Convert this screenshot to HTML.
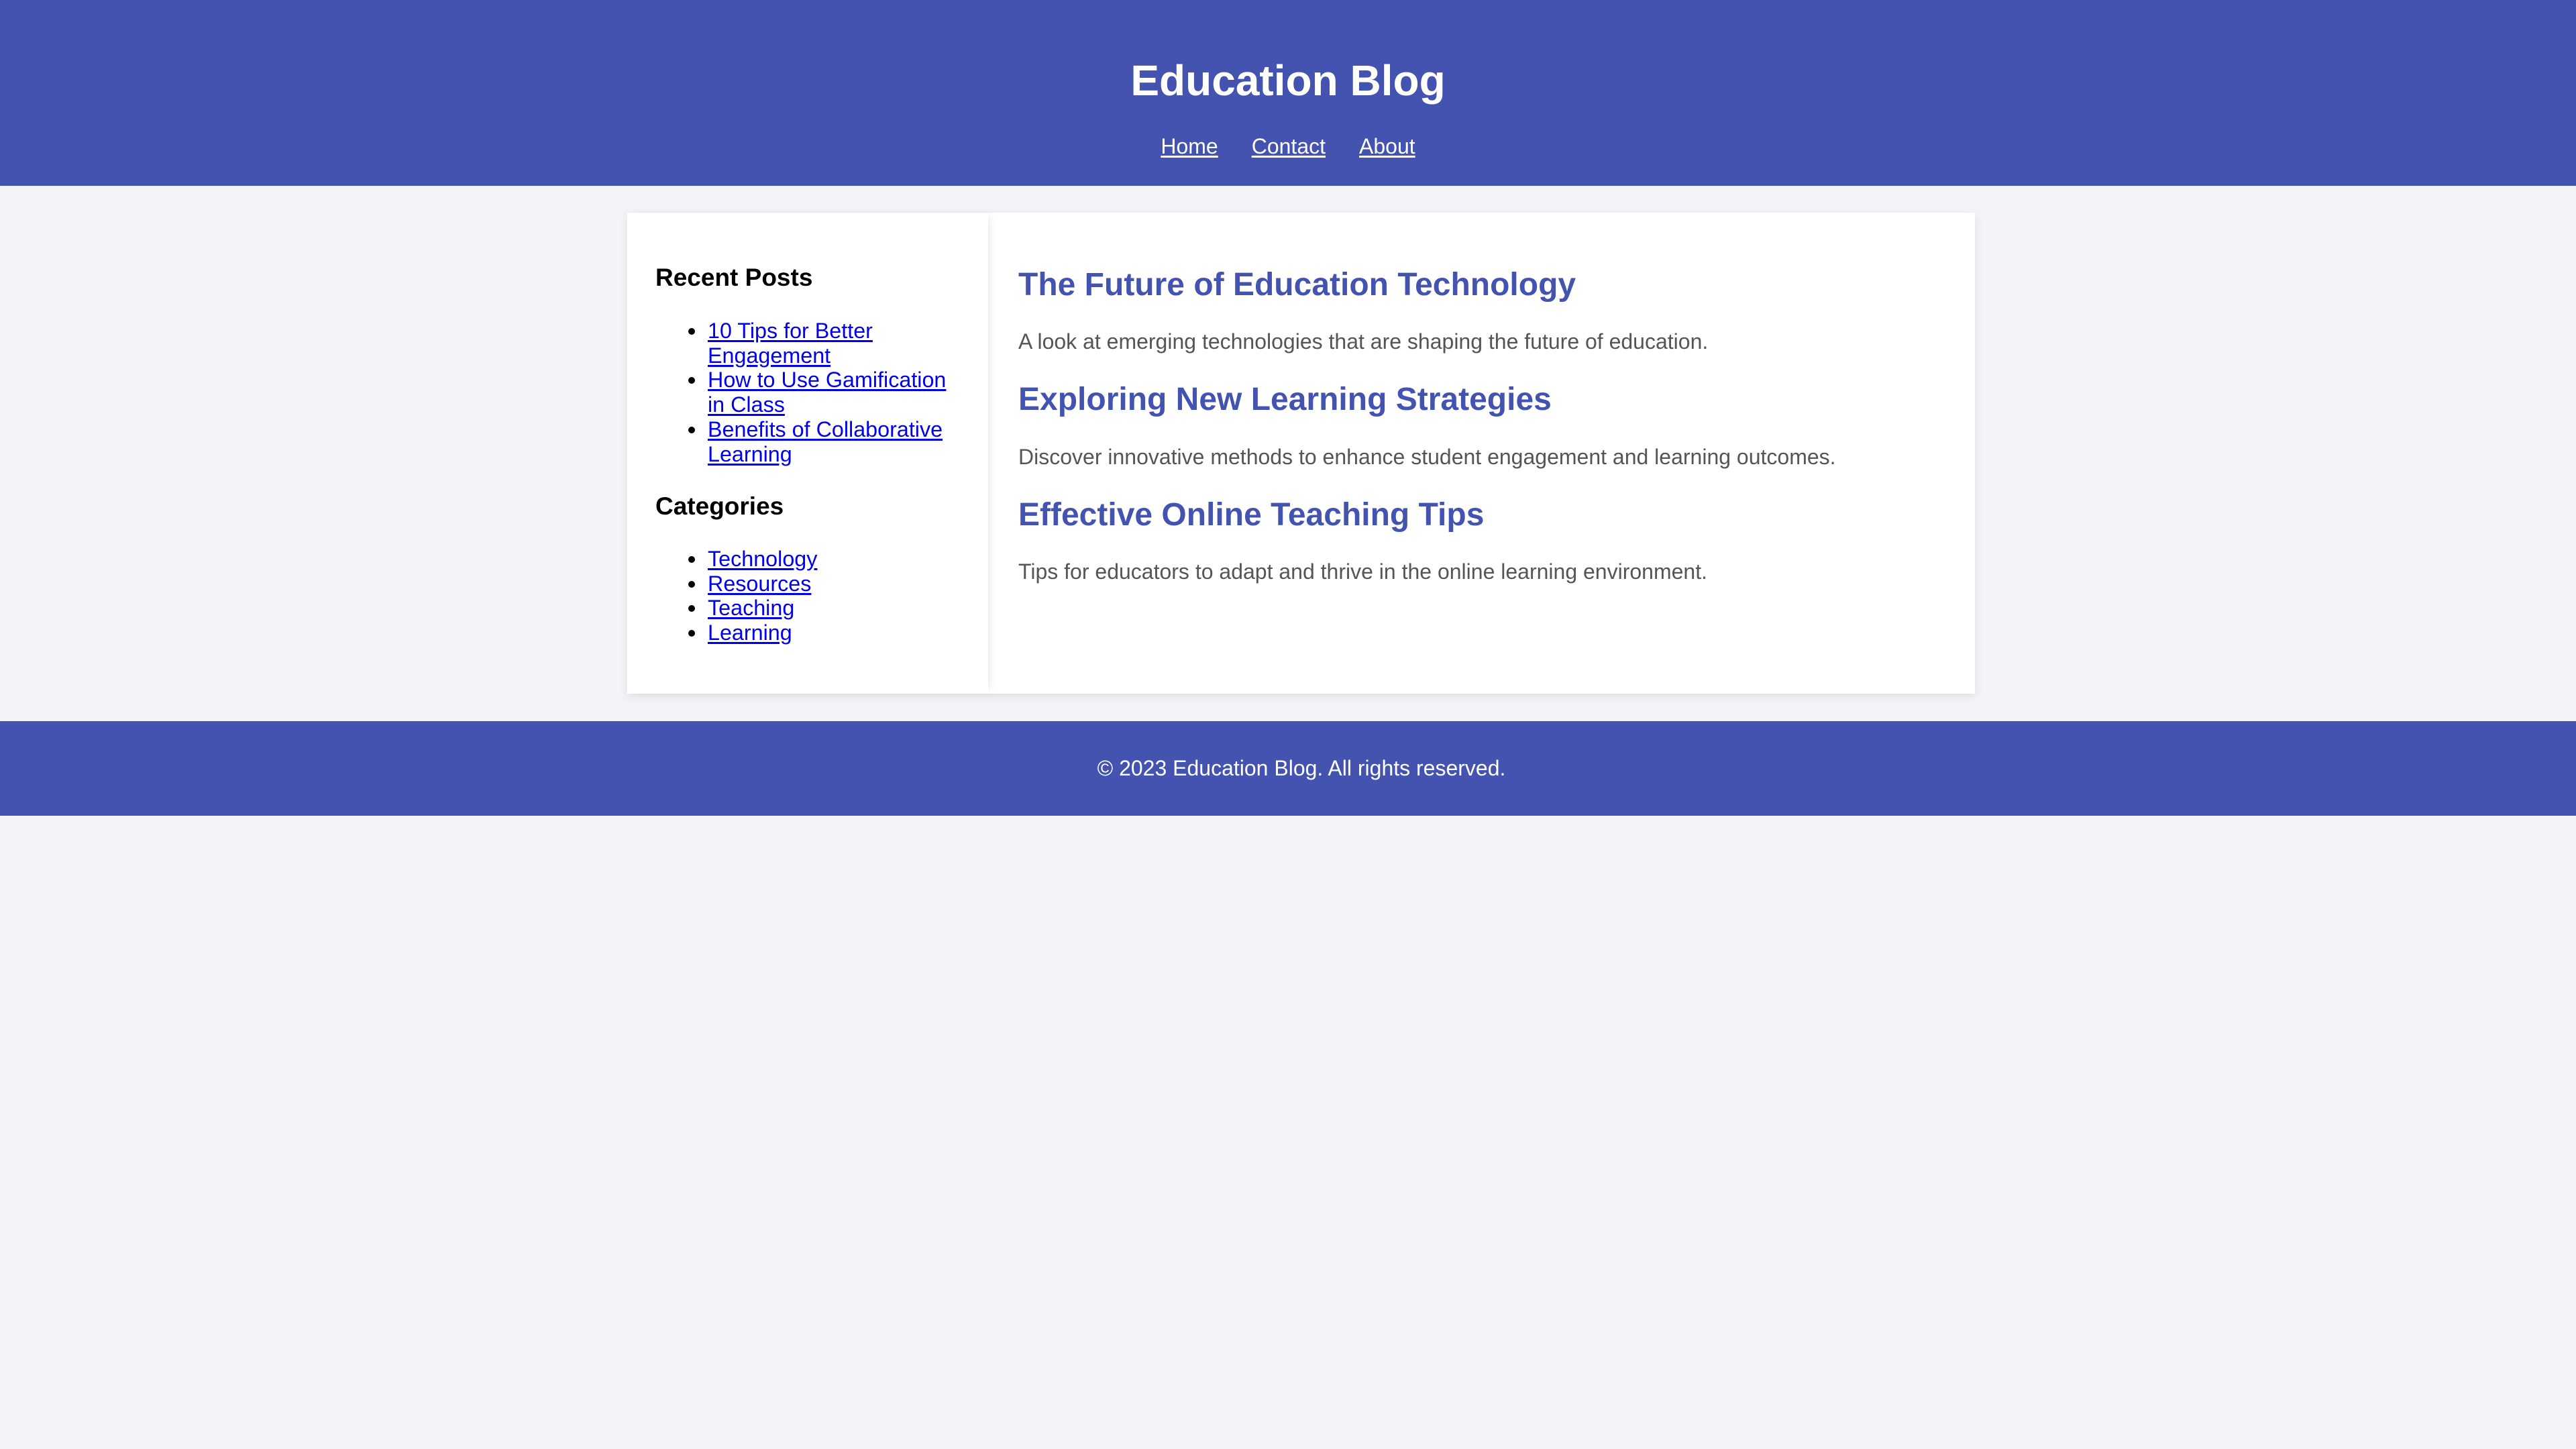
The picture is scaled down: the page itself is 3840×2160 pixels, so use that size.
<!DOCTYPE html>
<html><head><meta charset="utf-8"><style>
html,body{margin:0;padding:0;}
body{width:3840px;height:2160px;background:#f4f4f8;font-family:"Liberation Sans",Arial,sans-serif;position:relative;overflow:hidden;}
.hdr{position:absolute;left:0;top:0;width:3840px;height:277px;background:#4453b0;}
h1{position:absolute;left:0;width:3840px;top:82px;margin:0;text-align:center;color:#fff;font-size:64px;line-height:76px;font-weight:bold;}
.nav{position:absolute;left:0;width:3840px;top:198px;text-align:center;font-size:32px;line-height:40px;}
.nav a{color:#fff;text-decoration:underline;margin:0 25px;text-underline-offset:3px;}
.card{position:absolute;left:935px;top:317px;width:2009px;height:717px;background:#fff;box-shadow:0 4px 14px rgba(0,0,0,0.09);}
.side{position:absolute;left:0;top:0;width:538px;height:717px;background:#fff;box-shadow:6px 0 12px -6px rgba(0,0,0,0.12);}
h3{position:absolute;margin:0;font-size:37px;line-height:44px;font-weight:bold;color:#000;left:42px;}
ul{position:absolute;margin:0;padding:0;list-style:none;left:120px;font-size:32.3px;line-height:36.7px;}
li{position:relative;white-space:nowrap;}
li::before{content:"";position:absolute;left:-29px;top:14px;width:10px;height:10px;border-radius:50%;background:#000;}
ul a{color:#0000ee;text-decoration:underline;text-underline-offset:3px;}
h2{position:absolute;margin:0;left:583px;font-size:48px;line-height:56px;color:#4453b0;font-weight:bold;white-space:nowrap;}
p{position:absolute;margin:0;left:583px;font-size:32px;line-height:38px;color:#555;white-space:nowrap;}
.ftr{position:absolute;left:0;top:1075px;width:3840px;height:141px;background:#4453b0;color:#fff;text-align:center;font-size:32px;line-height:141px;}
.ftr span{position:relative;left:20px;}
</style></head><body>
<div class="hdr">
<h1>Education Blog</h1>
<div class="nav"><a>Home</a><a>Contact</a><a>About</a></div>
</div>
<div class="card">
<div class="side">
<h3 style="top:75px">Recent Posts</h3>
<ul style="top:158px">
<li><a>10 Tips for Better</a><br><a>Engagement</a></li>
<li><a>How to Use Gamification</a><br><a>in Class</a></li>
<li><a>Benefits of Collaborative</a><br><a>Learning</a></li>
</ul>
<h3 style="top:416px">Categories</h3>
<ul style="top:498px">
<li><a>Technology</a></li>
<li><a>Resources</a></li>
<li><a>Teaching</a></li>
<li><a>Learning</a></li>
</ul>
</div>
<h2 style="top:80px">The Future of Education Technology</h2>
<p style="top:173px">A look at emerging technologies that are shaping the future of education.</p>
<h2 style="top:251px">Exploring New Learning Strategies</h2>
<p style="top:345px">Discover innovative methods to enhance student engagement and learning outcomes.</p>
<h2 style="top:423px">Effective Online Teaching Tips</h2>
<p style="top:516px">Tips for educators to adapt and thrive in the online learning environment.</p>
</div>
<div class="ftr"><span>© 2023 Education Blog. All rights reserved.</span></div>
</body></html>
